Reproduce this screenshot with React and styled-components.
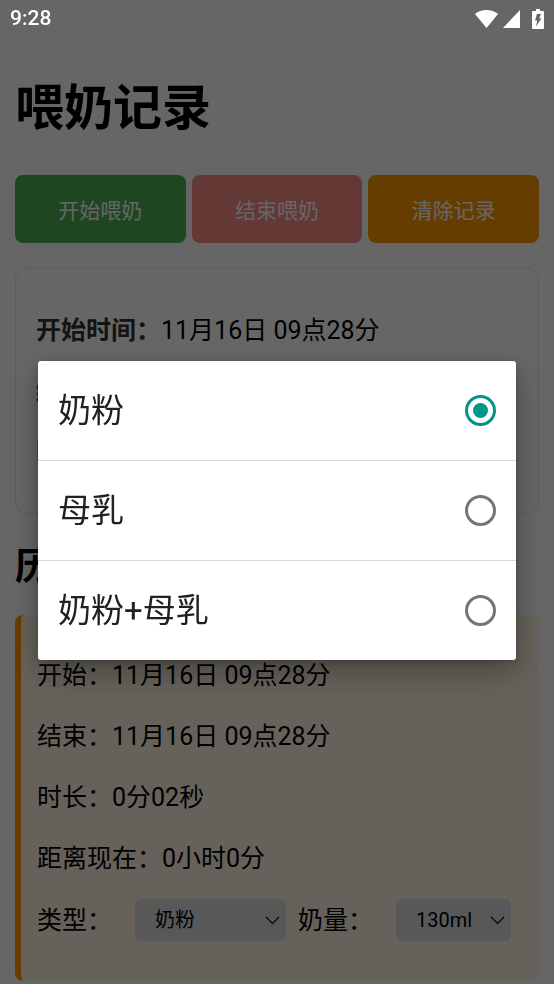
import React, { useState } from 'react'
import { styled, createGlobalStyle } from 'styled-components'

const GlobalStyle = createGlobalStyle`
  *{
    box-sizing: border-box;
  }

  body{
    margin: 0;
    background: #ffffff;
    color: #000000;
    font-family: Roboto, "Noto Sans CJK SC", sans-serif;
    font-size: 25px;
    line-height: 37px;
  }

  button, select, input{
    font-family: inherit;
    margin: 0;
  }
`

const StatusBar = styled.header`
  position: relative;
  z-index: 20;
  display: flex;
  align-items: center;
  justify-content: space-between;
  height: 37px;
  padding: 0 10px;
  color: #ffffff;
  font-size: 21px;
  font-weight: 500;

  .icons{
    display: flex;
    align-items: center;
  }

  .wifi{
    margin-right: 5px;
  }

  .signal{
    margin-right: 12px;
  }
`

const Page = styled.main`
  padding: 0 15px;
`

const Title = styled.h1`
  margin: 35px 0 30px;
  font-size: 49px;
  line-height: 73px;
`

const SubTitle = styled.h2`
  margin: 26px 0 20px;
  font-size: 37px;
  line-height: 55px;
`

const Buttons = styled.div`
  display: grid;
  grid-template-columns: repeat(3, 1fr);
  gap: 6px;
  margin-bottom: 24px;
`

const ActionButton = styled.button`
  height: 68px;
  padding: 0;
  border: 0;
  border-radius: 8px;
  background: ${({ $color }) => $color};
  color: #ffffff;
  font-size: 21px;

  &:disabled{
    opacity: 0.6;
  }
`

const Line = styled.p`
  margin: 24px 0;

  strong{
    color: #333333;
  }
`

const CurrentCard = styled.section`
  display: flow-root;
  padding: 20px 20px 18px;
  border: 1px solid #e6e6e6;
  border-radius: 12px;
`

const RecordCard = styled.article`
  display: flow-root;
  padding: 18px 16px;
  border-left: 6px solid #ff9800;
  border-radius: 8px;
  background: #fff3e0;
`

const FieldRow = styled.div`
  display: flex;
  align-items: center;
  gap: 12px;
  margin: -2px 0 22px;
`

const Field = styled.div`
  display: flex;
  align-items: center;
  gap: 23px;
`

const SelectBox = styled.div`
  display: grid;
  align-items: center;
  width: ${({ $width }) => $width}px;

  select, svg{
    grid-area: 1 / 1;
  }

  select{
    appearance: none;
    width: 100%;
    height: 42px;
    padding: 0 20px;
    border: 0;
    border-radius: 6px;
    background: #dddddd;
    color: #000000;
    font-size: 20px;
  }

  svg{
    justify-self: end;
    margin-right: 6px;
    pointer-events: none;
  }
`

const ModalWrapper = styled.div`
  position: fixed;
  inset: 0;
  z-index: 10;
  display: flex;
  align-items: center;
  justify-content: center;
  padding: 37px 38px 0;
  background: rgba(0, 0, 0, 0.6);
`

const OptionList = styled.div`
  width: 100%;
  border-radius: 3px;
  background: #ffffff;
  box-shadow: 0 12px 30px rgba(0, 0, 0, 0.3), 0 2px 8px rgba(0, 0, 0, 0.2);
`

const Option = styled.label`
  box-sizing: content-box;
  display: flex;
  align-items: center;
  justify-content: space-between;
  height: 99px;
  padding: 0 20px;
  color: #212121;
  font-size: 33px;

  & + &{
    border-top: 1px solid #dadada;
  }

  input{
    appearance: none;
    display: grid;
    place-items: center;
    width: 31px;
    height: 31px;
    border: 3px solid #757575;
    border-radius: 50%;
  }

  input:checked{
    border-color: #009688;
  }

  input:checked::before{
    content: "";
    width: 15px;
    height: 15px;
    border-radius: 50%;
    background: #009688;
  }
`

const types = ['奶粉', '母乳', '奶粉+母乳']

function Dropdown({ id, label, width, value, options, onChange }) {
  return (
    <Field>
      <label htmlFor={id}>{label}：</label>
      <SelectBox $width={width}>
        <select id={id} value={value} onChange={(e) => onChange(e.target.value)}>
          {options.map((item) => <option key={item}>{item}</option>)}
        </select>
        <svg width='15' height='9' viewBox='0 0 15 9' fill='none' stroke='#000000' strokeWidth='1.1'>
          <path d='M1 1l6.5 6.5L14 1' />
        </svg>
      </SelectBox>
    </Field>
  )
}

function TypeModal({ value, onSelect }) {
  return (
    <ModalWrapper>
      <OptionList role='radiogroup' aria-label='类型'>
        {types.map((item) => (
          <Option key={item}>
            {item}
            <input type='radio' name='type' checked={value === item} onChange={() => onSelect(item)} />
          </Option>
        ))}
      </OptionList>
    </ModalWrapper>
  )
}

function App() {

  const [type, setType] = useState('奶粉');
  const [amount, setAmount] = useState('130ml');

  return (
    <>
      <GlobalStyle />
      <StatusBar>
        <span>9:28</span>
        <div className='icons'>
          <svg className='wifi' width='23' height='18' viewBox='0 0 23 18' fill='#ffffff'>
            <path d='M0 4C3.200 1.300 7.200 0 11.500 0S19.800 1.300 23 4L11.500 18z' />
          </svg>
          <svg className='signal' width='17' height='18' viewBox='0 0 17 18' fill='#ffffff'>
            <path d='M17 0v18H0z' />
          </svg>
          <svg width='12' height='20' viewBox='0 0 12 20' fill='#ffffff'>
            <path fillRule='evenodd' d='M4 0h4v2h3a1 1 0 0 1 1 1v16a1 1 0 0 1-1 1H1a1 1 0 0 1-1-1V3a1 1 0 0 1 1-1h3zM5 5L3 11.500h2.200L4 17.500 9.500 9.300H7.200L9 5z' />
          </svg>
        </div>
      </StatusBar>
      <Page>
        <Title>喂奶记录</Title>
        <Buttons>
          <ActionButton $color='#4caf50'>开始喂奶</ActionButton>
          <ActionButton $color='#f44336' disabled>结束喂奶</ActionButton>
          <ActionButton $color='#ff9800'>清除记录</ActionButton>
        </Buttons>
        <CurrentCard>
          <Line><strong>开始时间：</strong>11月16日 09点28分</Line>
          <Line><strong>结束时间：</strong>11月16日 09点28分</Line>
          <Line><strong>时长：</strong>0分02秒</Line>
        </CurrentCard>
        <SubTitle>历史记录</SubTitle>
        <RecordCard>
          <Line>开始：11月16日 09点28分</Line>
          <Line>结束：11月16日 09点28分</Line>
          <Line>时长：0分02秒</Line>
          <Line>距离现在：0小时0分</Line>
          <FieldRow>
            <Dropdown id='type' label='类型' width={151} value={type} options={types} onChange={setType} />
            <Dropdown id='amount' label='奶量' width={115} value={amount} options={['130ml']} onChange={setAmount} />
          </FieldRow>
        </RecordCard>
      </Page>
      <TypeModal value={type} onSelect={setType} />
    </>
  )
}

export default App
